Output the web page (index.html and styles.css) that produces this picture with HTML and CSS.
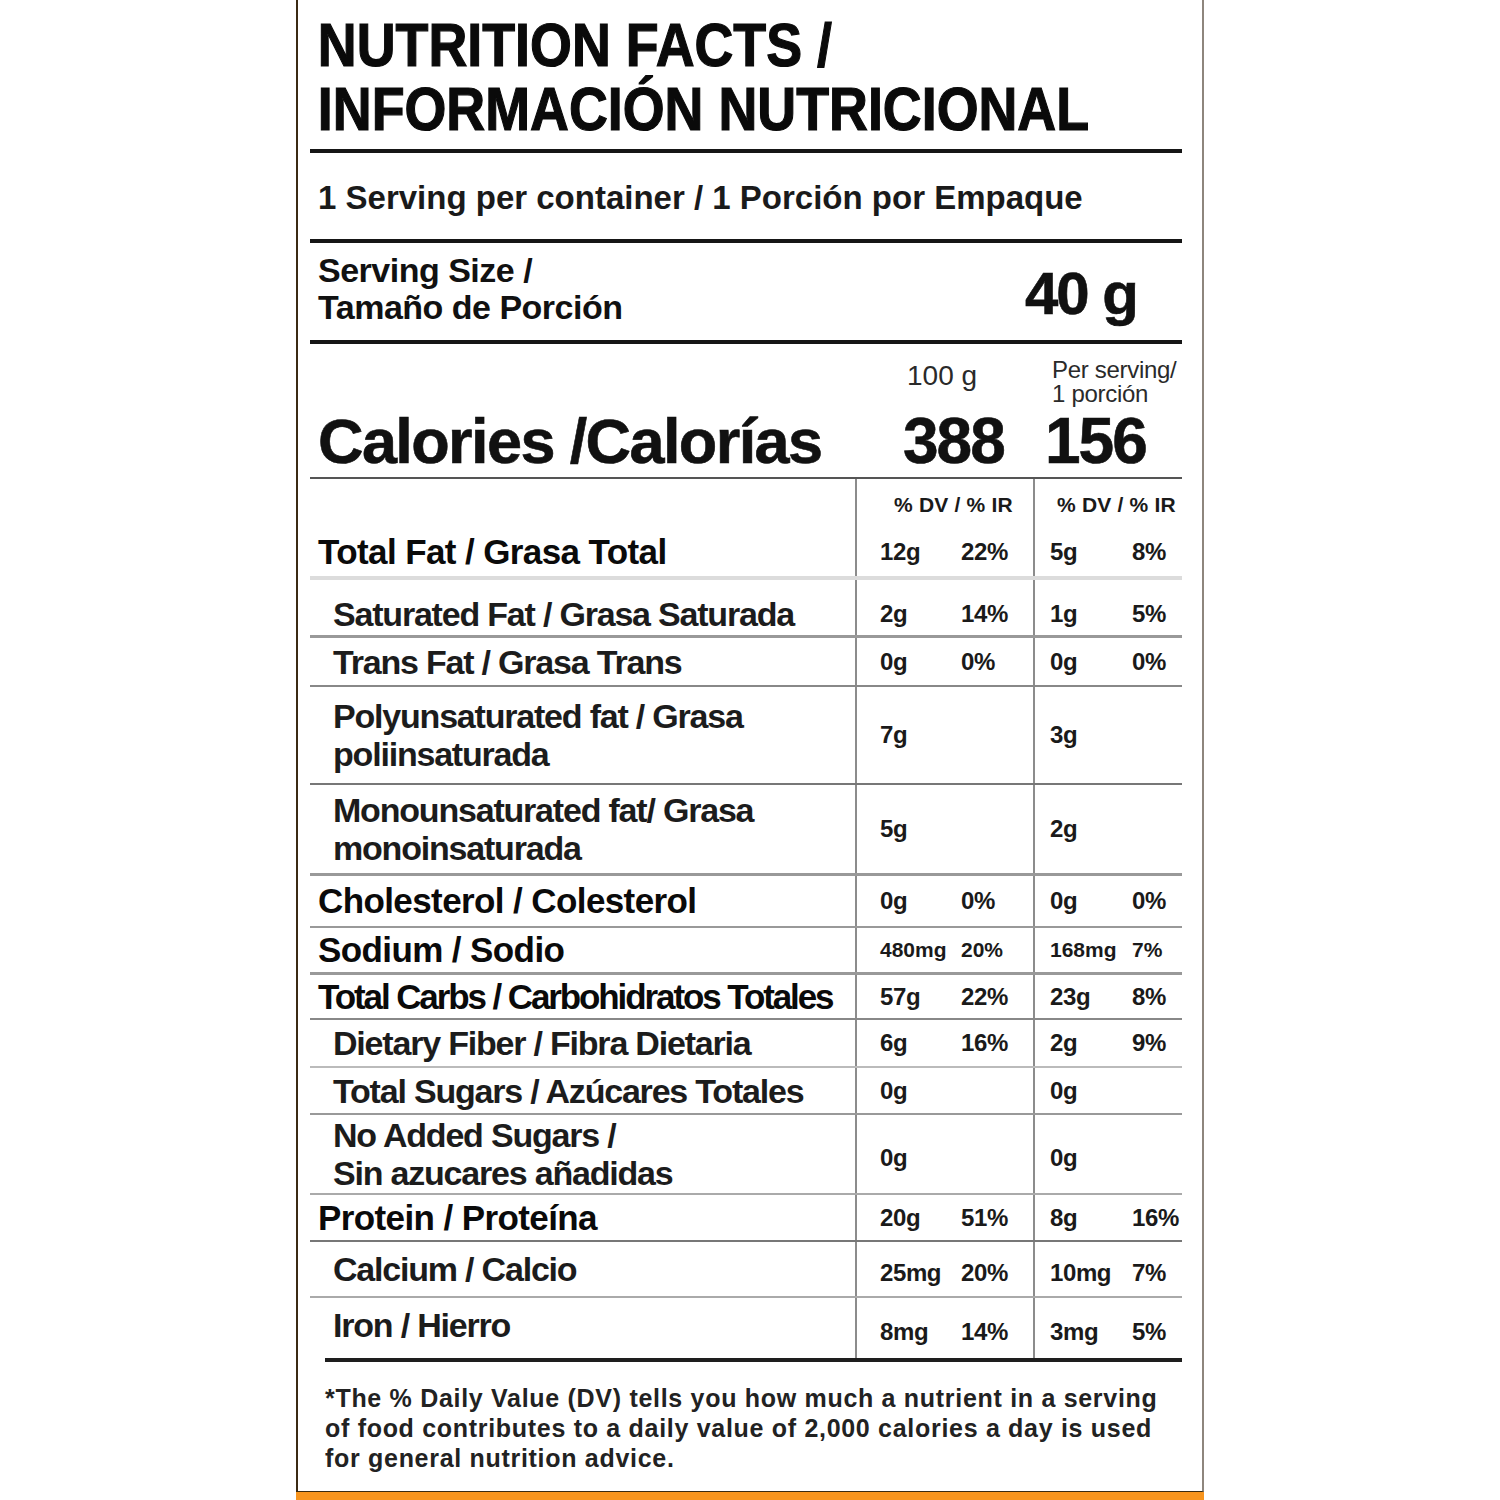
FILE: index.html
```html
<!DOCTYPE html>
<html lang="es">
<head>
<meta charset="utf-8">
<title>Nutrition Facts</title>
<link rel="stylesheet" href="styles.css">
</head>
<body>
<div class="frame">
  <div class="label">
    <div class="title-wrap">
      <h1 class="title"><span class="tline">NUTRITION FACTS /</span><span class="tline">INFORMACIÓN NUTRICIONAL</span></h1>
    </div>
    <div class="rule thick"></div>
    <div class="servings">1 Serving per container / 1 Porción por Empaque</div>
    <div class="rule thick"></div>
    <div class="size-row">
      <div class="size-label">Serving Size /<br>Tamaño de Porción</div>
      <div class="size-val">40 g</div>
    </div>
    <div class="rule thick"></div>
    <div class="cal-block">
      <div class="cal-head h1">100 g</div>
      <div class="cal-head h2">Per serving/<br>1 porción</div>
      <div class="cal-label">Calories /Calorías</div>
      <div class="cal-num n1">388</div>
      <div class="cal-num n2">156</div>
    </div>
    <div class="rule mid"></div>
    <div class="table">
      <div class="row r-hdr">
        <div class="name"></div>
        <div class="cell c1 dv">% DV / % IR</div>
        <div class="cell c2 dv">% DV / % IR</div>
      </div>
      <div class="row r-fat">
        <div class="name main">Total Fat / Grasa Total</div>
        <div class="cell c1"><span class="amt">12g</span><span class="pct">22%</span></div>
        <div class="cell c2"><span class="amt">5g</span><span class="pct">8%</span></div>
      </div>
      <div class="row r-sat">
        <div class="name sub">Saturated Fat / Grasa Saturada</div>
        <div class="cell c1"><span class="amt">2g</span><span class="pct">14%</span></div>
        <div class="cell c2"><span class="amt">1g</span><span class="pct">5%</span></div>
      </div>
      <div class="row r-trans">
        <div class="name sub">Trans Fat / Grasa Trans</div>
        <div class="cell c1"><span class="amt">0g</span><span class="pct">0%</span></div>
        <div class="cell c2"><span class="amt">0g</span><span class="pct">0%</span></div>
      </div>
      <div class="row r-poly">
        <div class="name sub two">Polyunsaturated fat / Grasa<br>poliinsaturada</div>
        <div class="cell c1"><span class="amt">7g</span></div>
        <div class="cell c2"><span class="amt">3g</span></div>
      </div>
      <div class="row r-mono">
        <div class="name sub two">Monounsaturated fat/ Grasa<br>monoinsaturada</div>
        <div class="cell c1"><span class="amt">5g</span></div>
        <div class="cell c2"><span class="amt">2g</span></div>
      </div>
      <div class="row r-chol">
        <div class="name main">Cholesterol / Colesterol</div>
        <div class="cell c1"><span class="amt">0g</span><span class="pct">0%</span></div>
        <div class="cell c2"><span class="amt">0g</span><span class="pct">0%</span></div>
      </div>
      <div class="row r-sod">
        <div class="name main">Sodium / Sodio</div>
        <div class="cell c1 small"><span class="amt">480mg</span><span class="pct">20%</span></div>
        <div class="cell c2 small"><span class="amt">168mg</span><span class="pct">7%</span></div>
      </div>
      <div class="row r-carb">
        <div class="name main tight">Total Carbs / Carbohidratos Totales</div>
        <div class="cell c1"><span class="amt">57g</span><span class="pct">22%</span></div>
        <div class="cell c2"><span class="amt">23g</span><span class="pct">8%</span></div>
      </div>
      <div class="row r-fib">
        <div class="name sub">Dietary Fiber / Fibra Dietaria</div>
        <div class="cell c1"><span class="amt">6g</span><span class="pct">16%</span></div>
        <div class="cell c2"><span class="amt">2g</span><span class="pct">9%</span></div>
      </div>
      <div class="row r-sug">
        <div class="name sub">Total Sugars / Azúcares Totales</div>
        <div class="cell c1"><span class="amt">0g</span></div>
        <div class="cell c2"><span class="amt">0g</span></div>
      </div>
      <div class="row r-add">
        <div class="name sub two">No Added Sugars /<br>Sin azucares añadidas</div>
        <div class="cell c1 low"><span class="amt">0g</span></div>
        <div class="cell c2 low"><span class="amt">0g</span></div>
      </div>
      <div class="row r-prot">
        <div class="name main">Protein / Proteína</div>
        <div class="cell c1"><span class="amt">20g</span><span class="pct">51%</span></div>
        <div class="cell c2"><span class="amt">8g</span><span class="pct">16%</span></div>
      </div>
      <div class="row r-cal">
        <div class="name sub">Calcium / Calcio</div>
        <div class="cell c1 low"><span class="amt">25mg</span><span class="pct">20%</span></div>
        <div class="cell c2 low"><span class="amt">10mg</span><span class="pct">7%</span></div>
      </div>
      <div class="row r-iron">
        <div class="name sub high">Iron / Hierro</div>
        <div class="cell c1 low"><span class="amt">8mg</span><span class="pct">14%</span></div>
        <div class="cell c2 low"><span class="amt">3mg</span><span class="pct">5%</span></div>
      </div>
    </div>
    <div class="rule bottom"></div>
    <p class="note">*The % Daily Value (DV) tells you how much a nutrient in a serving<br>of food contributes to a daily value of 2,000 calories a day is used<br>for general nutrition advice.</p>
  </div>
</div>
</body>
</html>
```

FILE: styles.css
```css
* { box-sizing: border-box; }

html, body {
  margin: 0;
  padding: 0;
  background: #ffffff;
}

body {
  font-family: "Liberation Sans", Arial, sans-serif;
  color: #111;
}

.frame {
  margin-left: 296px;
  width: 908px;
  height: 1500px;
  border-bottom: 8px solid #f7941d;
}

.label {
  height: 1492px;
  border-left: 2px solid #3b2a14;
  border-right: 2px solid #8e867d;
  border-bottom: 1px solid #3a2a10;
  padding-left: 12px;
  padding-right: 20px;
  display: flex;
  flex-direction: column;
}

.title-wrap {
  height: 149px;
  flex: none;
  overflow: hidden;
}

.title {
  margin: 0;
  padding: 13px 0 0 9px;
  width: 1000px;
  white-space: nowrap;
  font-weight: 700;
  font-size: 62px;
  line-height: 64px;
  letter-spacing: 0;
  color: #0a0a0a;
  -webkit-text-stroke: 1.2px #0a0a0a;
  transform: scaleX(0.868);
  transform-origin: 0 0;
}

.tline { display: block; }

.rule { flex: none; }
.rule.thick { height: 4px; background: #161616; }
.rule.mid { height: 2px; background: #555; }
.rule.bottom { height: 4px; background: #1e1e1e; margin-left: 15px; }

.servings {
  height: 86px;
  flex: none;
  padding: 4px 0 0 8px;
  display: flex;
  align-items: center;
  font-weight: 700;
  font-size: 33px;
  color: #1a1a1a;
}

.size-row {
  height: 97px;
  flex: none;
  display: flex;
  align-items: center;
  justify-content: space-between;
  padding: 0 45px 0 8px;
}

.size-label {
  font-weight: 700;
  font-size: 34px;
  line-height: 37px;
  letter-spacing: -0.5px;
  padding-bottom: 6px;
}

.size-val {
  font-weight: 700;
  font-size: 60px;
  letter-spacing: -2px;
  padding-top: 4px;
  -webkit-text-stroke: 0.6px #111;
}

.cal-block {
  height: 133px;
  flex: none;
  display: grid;
  grid-template-columns: 593px 140px 139px;
  grid-template-rows: 64px 69px;
}

.cal-head {
  color: #2a2a2a;
  font-weight: 400;
}
.cal-head.h1 {
  grid-column: 2;
  grid-row: 1;
  padding: 17px 0 0 4px;
  font-size: 28px;
  line-height: 30px;
}
.cal-head.h2 {
  grid-column: 3;
  grid-row: 1;
  padding: 14px 0 0 9px;
  font-size: 24px;
  line-height: 24px;
  letter-spacing: -0.3px;
}

.cal-label {
  grid-column: 1;
  grid-row: 2;
  padding-left: 8px;
  font-weight: 700;
  font-size: 63px;
  line-height: 66px;
  letter-spacing: -1.6px;
  -webkit-text-stroke: 0.6px #111;
}
.cal-num {
  grid-row: 2;
  font-weight: 700;
  font-size: 64px;
  line-height: 66px;
  letter-spacing: -2px;
  -webkit-text-stroke: 0.6px #111;
}
.cal-num.n1 { grid-column: 2; padding-left: 0; }
.cal-num.n2 { grid-column: 3; padding-left: 2px; }

.table { flex: none; }

.row {
  display: grid;
  grid-template-columns: 545px 178px 149px;
  border-bottom: 2px solid #999;
}

.name {
  display: flex;
  align-items: center;
  font-weight: 700;
  font-size: 34px;
  line-height: 38px;
}
.name.main {
  padding-left: 8px;
  font-size: 35px;
  letter-spacing: -0.6px;
  color: #0a0a0a;
}
.name.main.tight { letter-spacing: -2.1px; }
.name.sub {
  padding-left: 23px;
  letter-spacing: -1.2px;
  color: #1c1c1c;
}
.name.high { padding-bottom: 6px; }

.cell {
  display: flex;
  align-items: center;
  border-left: 2px solid #8c8c8c;
  font-weight: 700;
  font-size: 24px;
  letter-spacing: -0.4px;
  color: #1a1a1a;
}
.cell.c1 { padding-left: 23px; }
.cell.c2 { padding-left: 15px; }
.cell.c1 .amt { width: 81px; }
.cell.c2 .amt { width: 82px; }
.cell.small { font-size: 21px; letter-spacing: 0; }
.cell.low { padding-top: 8px; }

.cell.dv {
  font-size: 21px;
  letter-spacing: 0.2px;
  padding-top: 4px;
}
.cell.c1.dv { padding-left: 37px; }
.cell.c2.dv { padding-left: 22px; }

.r-hdr { height: 48px; border-bottom: 0; }
.r-fat { height: 53px; border-bottom: 4px solid #dcdcdc; }
.r-sat { height: 58px; border-bottom: 3px solid #999; }
.r-sat .name, .r-sat .cell { padding-top: 12px; }
.r-trans { height: 49px; border-bottom: 2px solid #888; }
.r-poly { height: 98px; border-bottom: 2px solid #777; }
.r-mono { height: 91px; border-bottom: 3px solid #999; }
.r-chol { height: 52px; border-bottom: 2px solid #999; }
.r-sod { height: 47px; border-bottom: 3px solid #999; }
.r-carb { height: 45px; border-bottom: 2px solid #888; }
.r-fib { height: 48px; border-bottom: 2px solid #bbb; }
.r-sug { height: 47px; border-bottom: 2px solid #999; }
.r-add { height: 80px; border-bottom: 2px solid #aaa; }
.r-prot { height: 47px; border-bottom: 2px solid #777; }
.r-cal { height: 56px; border-bottom: 2px solid #aaa; }
.r-iron { height: 60px; border-bottom: 0; }

.note {
  margin: 0;
  padding: 21px 0 0 15px;
  font-weight: 700;
  font-size: 25px;
  line-height: 30px;
  letter-spacing: 0.7px;
  color: #222;
}
```
